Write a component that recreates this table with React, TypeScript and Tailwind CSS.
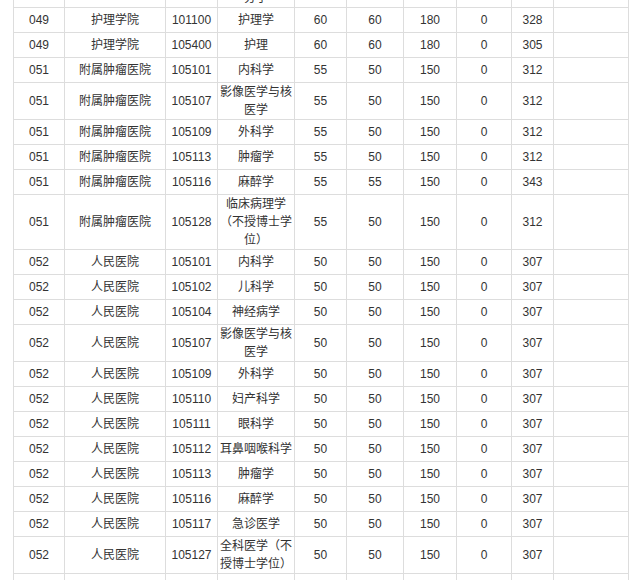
type Row = [string, string, string, string, string, string, string, string, string];

const rows: Row[] = [
  ['049', '护理学院', '101100', '护理学', '60', '60', '180', '0', '328'],
  ['049', '护理学院', '105400', '护理', '60', '60', '180', '0', '305'],
  ['051', '附属肿瘤医院', '105101', '内科学', '55', '50', '150', '0', '312'],
  ['051', '附属肿瘤医院', '105107', '影像医学与核医学', '55', '50', '150', '0', '312'],
  ['051', '附属肿瘤医院', '105109', '外科学', '55', '50', '150', '0', '312'],
  ['051', '附属肿瘤医院', '105113', '肿瘤学', '55', '50', '150', '0', '312'],
  ['051', '附属肿瘤医院', '105116', '麻醉学', '55', '55', '150', '0', '343'],
  ['051', '附属肿瘤医院', '105128', '临床病理学（不授博士学位）', '55', '50', '150', '0', '312'],
  ['052', '人民医院', '105101', '内科学', '50', '50', '150', '0', '307'],
  ['052', '人民医院', '105102', '儿科学', '50', '50', '150', '0', '307'],
  ['052', '人民医院', '105104', '神经病学', '50', '50', '150', '0', '307'],
  ['052', '人民医院', '105107', '影像医学与核医学', '50', '50', '150', '0', '307'],
  ['052', '人民医院', '105109', '外科学', '50', '50', '150', '0', '307'],
  ['052', '人民医院', '105110', '妇产科学', '50', '50', '150', '0', '307'],
  ['052', '人民医院', '105111', '眼科学', '50', '50', '150', '0', '307'],
  ['052', '人民医院', '105112', '耳鼻咽喉科学', '50', '50', '150', '0', '307'],
  ['052', '人民医院', '105113', '肿瘤学', '50', '50', '150', '0', '307'],
  ['052', '人民医院', '105116', '麻醉学', '50', '50', '150', '0', '307'],
  ['052', '人民医院', '105117', '急诊医学', '50', '50', '150', '0', '307'],
  ['052', '人民医院', '105127', '全科医学（不授博士学位）', '50', '50', '150', '0', '307'],
];

const widths = [51, 101, 52, 77, 52, 57, 53, 55, 42, 75];

function Cell({ children }: { children?: React.ReactNode }) {
  return (
    <td className="h-[25px] border border-[#dddddd] px-[2px] py-0 text-center align-middle leading-[18px]">
      {children}
    </td>
  );
}

function EmptyRow({ children }: { children?: React.ReactNode }) {
  return (
    <tr>
      <Cell />
      <Cell />
      <Cell />
      <Cell>{children}</Cell>
      <Cell />
      <Cell />
      <Cell />
      <Cell />
      <Cell />
      <Cell />
    </tr>
  );
}

export default function App() {
  return (
    <div className="h-[580px] w-[635px] overflow-hidden bg-white">
      <div className="-mt-[30px] pl-[13px]">
        <table
          className="w-[615px] table-fixed border-collapse text-[12px] text-[#333333]"
          style={{ fontFamily: '"Liberation Sans", Arial, "Noto Sans CJK SC", sans-serif' }}
        >
          <colgroup>
            {widths.map((w, i) => (
              <col key={i} style={{ width: w }} />
            ))}
          </colgroup>
          <tbody>
            {/* row cut off by the top edge; only the tail of its subject shows */}
            <EmptyRow>
              基础医学
              <br />
              分子
            </EmptyRow>
            {rows.map((r, i) => (
              <tr key={i}>
                {r.map((v, j) => (
                  <Cell key={j}>{v}</Cell>
                ))}
                <Cell />
              </tr>
            ))}
            {/* next row, only its top border fits in the window */}
            <EmptyRow />
          </tbody>
        </table>
      </div>
    </div>
  );
}
